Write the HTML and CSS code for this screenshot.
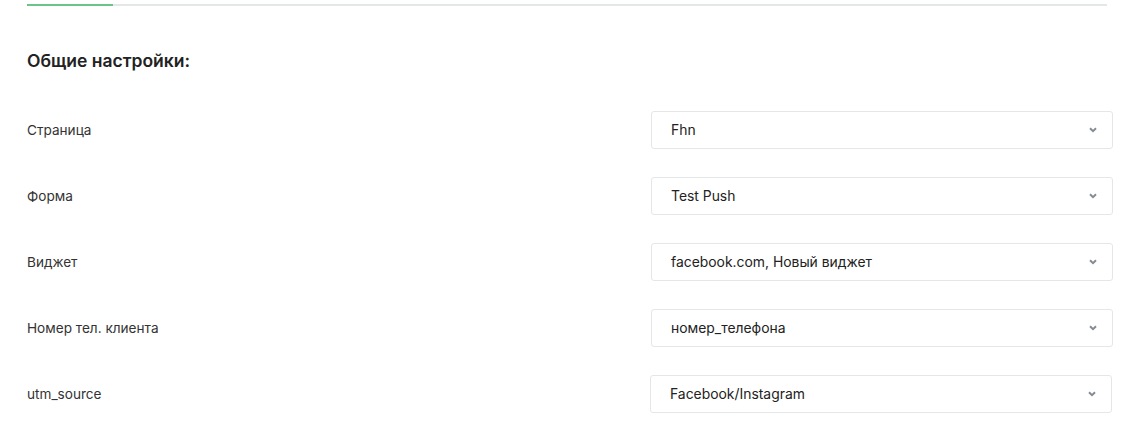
FILE: index.html
```html
<!DOCTYPE html>
<html lang="ru">
<head>
<meta charset="utf-8">
<link rel="stylesheet" href="styles.css">
</head>
<body>
<div class="page">
  <div class="tabs"><div class="tab-active"></div></div>
  <h2 class="title">Общие настройки:</h2>
  <div class="form">
    <div class="row">
      <div class="label">Страница</div>
      <div class="select"><span>Fhn</span><svg class="chev" width="8" height="6" viewBox="0 0 8 6"><path d="M1 1.2 L4 4.2 L7 1.2" fill="none" stroke="#858b94" stroke-width="2"/></svg></div>
    </div>
    <div class="row">
      <div class="label">Форма</div>
      <div class="select"><span>Test Push</span><svg class="chev" width="8" height="6" viewBox="0 0 8 6"><path d="M1 1.2 L4 4.2 L7 1.2" fill="none" stroke="#858b94" stroke-width="2"/></svg></div>
    </div>
    <div class="row">
      <div class="label">Виджет</div>
      <div class="select"><span>facebook.com, Новый виджет</span><svg class="chev" width="8" height="6" viewBox="0 0 8 6"><path d="M1 1.2 L4 4.2 L7 1.2" fill="none" stroke="#858b94" stroke-width="2"/></svg></div>
    </div>
    <div class="row">
      <div class="label">Номер тел. клиента</div>
      <div class="select"><span>номер_телефона</span><svg class="chev" width="8" height="6" viewBox="0 0 8 6"><path d="M1 1.2 L4 4.2 L7 1.2" fill="none" stroke="#858b94" stroke-width="2"/></svg></div>
    </div>
    <div class="row row-last">
      <div class="label">utm_source</div>
      <div class="select"><span>Facebook/Instagram</span><svg class="chev" width="8" height="6" viewBox="0 0 8 6"><path d="M1 1.2 L4 4.2 L7 1.2" fill="none" stroke="#858b94" stroke-width="2"/></svg></div>
    </div>
  </div>
</div>
</body>
</html>
```

FILE: styles.css
```css
* { box-sizing: border-box; }
html, body { margin: 0; padding: 0; background: #fff; }
body {
  font-family: Inter, "Noto Sans", "DejaVu Sans", sans-serif;
  color: #2b2b2b;
}
.page {
  padding: 4px 0 0 27px;
}
.tabs {
  width: 1080px;
  height: 2px;
  background: #e3e8e7;
}
.tab-active {
  width: 86px;
  height: 2px;
  background: #6cc486;
}
.title {
  margin: 45px 0 0 0;
  font-size: 17.5px;
  line-height: 20px;
  font-weight: 600;
  color: #222;
}
.form {
  margin-top: 40px;
  display: flex;
  flex-direction: column;
  gap: 28px;
}
.row {
  display: flex;
  align-items: center;
  height: 38px;
}
.label {
  width: 624px;
  font-size: 13.6px;
  color: #333;
}
.row-last .label { width: 623px; }
.select {
  width: 462px;
  height: 38px;
  border: 1px solid #e3e7ea;
  border-radius: 3px;
  display: flex;
  align-items: center;
  justify-content: space-between;
  padding: 0 15px 0 19px;
  font-size: 13.9px;
  color: #222;
}
.chev { display: block; }
```
